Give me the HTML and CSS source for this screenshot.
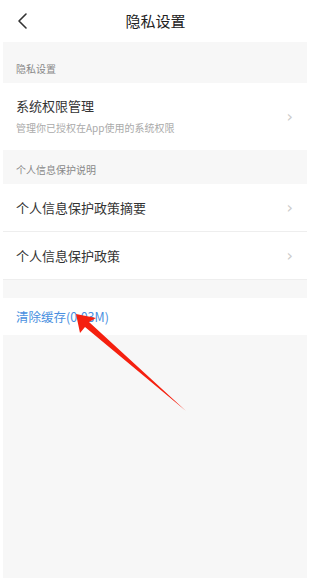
FILE: index.html
```html
<!DOCTYPE html>
<html lang="zh">
<head>
<meta charset="utf-8">
<link rel="stylesheet" href="styles.css">
</head>
<body>
<div class="page">
  <header class="topbar">
    <svg class="back" width="14" height="20" viewBox="0 0 14 20"><path d="M10 3 L3 10 L10 17" fill="none" stroke="#333" stroke-width="1.6" stroke-linecap="round" stroke-linejoin="round"/></svg>
    <h1 class="title">隐私设置</h1>
  </header>
  <main class="content">
    <div class="section-label first">隐私设置</div>
    <div class="row tall">
      <div class="row-text">
        <div class="row-title">系统权限管理</div>
        <div class="row-sub">管理你已授权在App使用的系统权限</div>
      </div>
      <span class="chev">›</span>
    </div>
    <div class="section-label">个人信息保护说明</div>
    <div class="row">
      <div class="row-title">个人信息保护政策摘要</div>
      <span class="chev">›</span>
    </div>
    <div class="row">
      <div class="row-title">个人信息保护政策</div>
      <span class="chev">›</span>
    </div>
    <div class="spacer"></div>
    <div class="row cache">
      <div class="cache-text">清除缓存(0.03M)</div>
    </div>
  </main>
  <svg class="arrow" width="311" height="578" viewBox="0 0 311 578">
    <polygon points="76,314 96,318 89,322 186,411 85,327 80,333" fill="#f5200f"/>
  </svg>
</div>
</body>
</html>
```

FILE: styles.css
```css
* { box-sizing: border-box; margin: 0; padding: 0; }
html, body { background: #fff; }
body {
  font-family: "Noto Sans CJK SC", "Noto Sans", sans-serif;
  width: 311px;
  height: 578px;
  overflow: hidden;
}
.page {
  position: relative;
  height: 578px;
  display: flex;
  flex-direction: column;
  padding: 0 4px 0 3px;
}
.topbar {
  height: 42px;
  flex: 0 0 42px;
  display: flex;
  align-items: center;
  justify-content: center;
  position: relative;
  background: #fff;
  margin: 0 -4px 0 -3px;
}
.back {
  position: absolute;
  left: 16px;
  top: 11px;
}
.title {
  font-size: 15px;
  font-weight: normal;
  color: #222;
  line-height: 20px;
}
.content {
  flex: 1;
  background: #f7f7f7;
  display: flex;
  flex-direction: column;
}
.section-label {
  font-size: 10px;
  color: #888;
  padding: 0 0 0 13px;
  height: 34px;
  display: flex;
  align-items: flex-end;
  padding-bottom: 7px;
}
.section-label.first { height: 41px; }
.row {
  background: #fff;
  height: 48px;
  flex: 0 0 auto;
  display: flex;
  align-items: center;
  justify-content: space-between;
  padding: 0 14px 0 13px;
  border-bottom: 1px solid #eeeeee;
}
.row.tall { height: 67px; border-bottom: none; }
.row-text { display: flex; flex-direction: column; }
.row-title { font-size: 13px; color: #333; line-height: 18px; }
.row.tall .row-title { margin-top: -2px; }
.row-sub { font-size: 10px; color: #aaa; line-height: 14px; margin-top: 6px; }
.chev {
  font-size: 16px;
  color: #cccccc;
  line-height: 16px;
  font-family: "DejaVu Sans", sans-serif;
}
.spacer { height: 18px; }
.row.cache { height: 37px; border-bottom: none; }
.cache-text { font-size: 12.5px; color: #4a8fe0; }
.arrow {
  position: absolute;
  left: 0;
  top: 0;
  pointer-events: none;
}
```
